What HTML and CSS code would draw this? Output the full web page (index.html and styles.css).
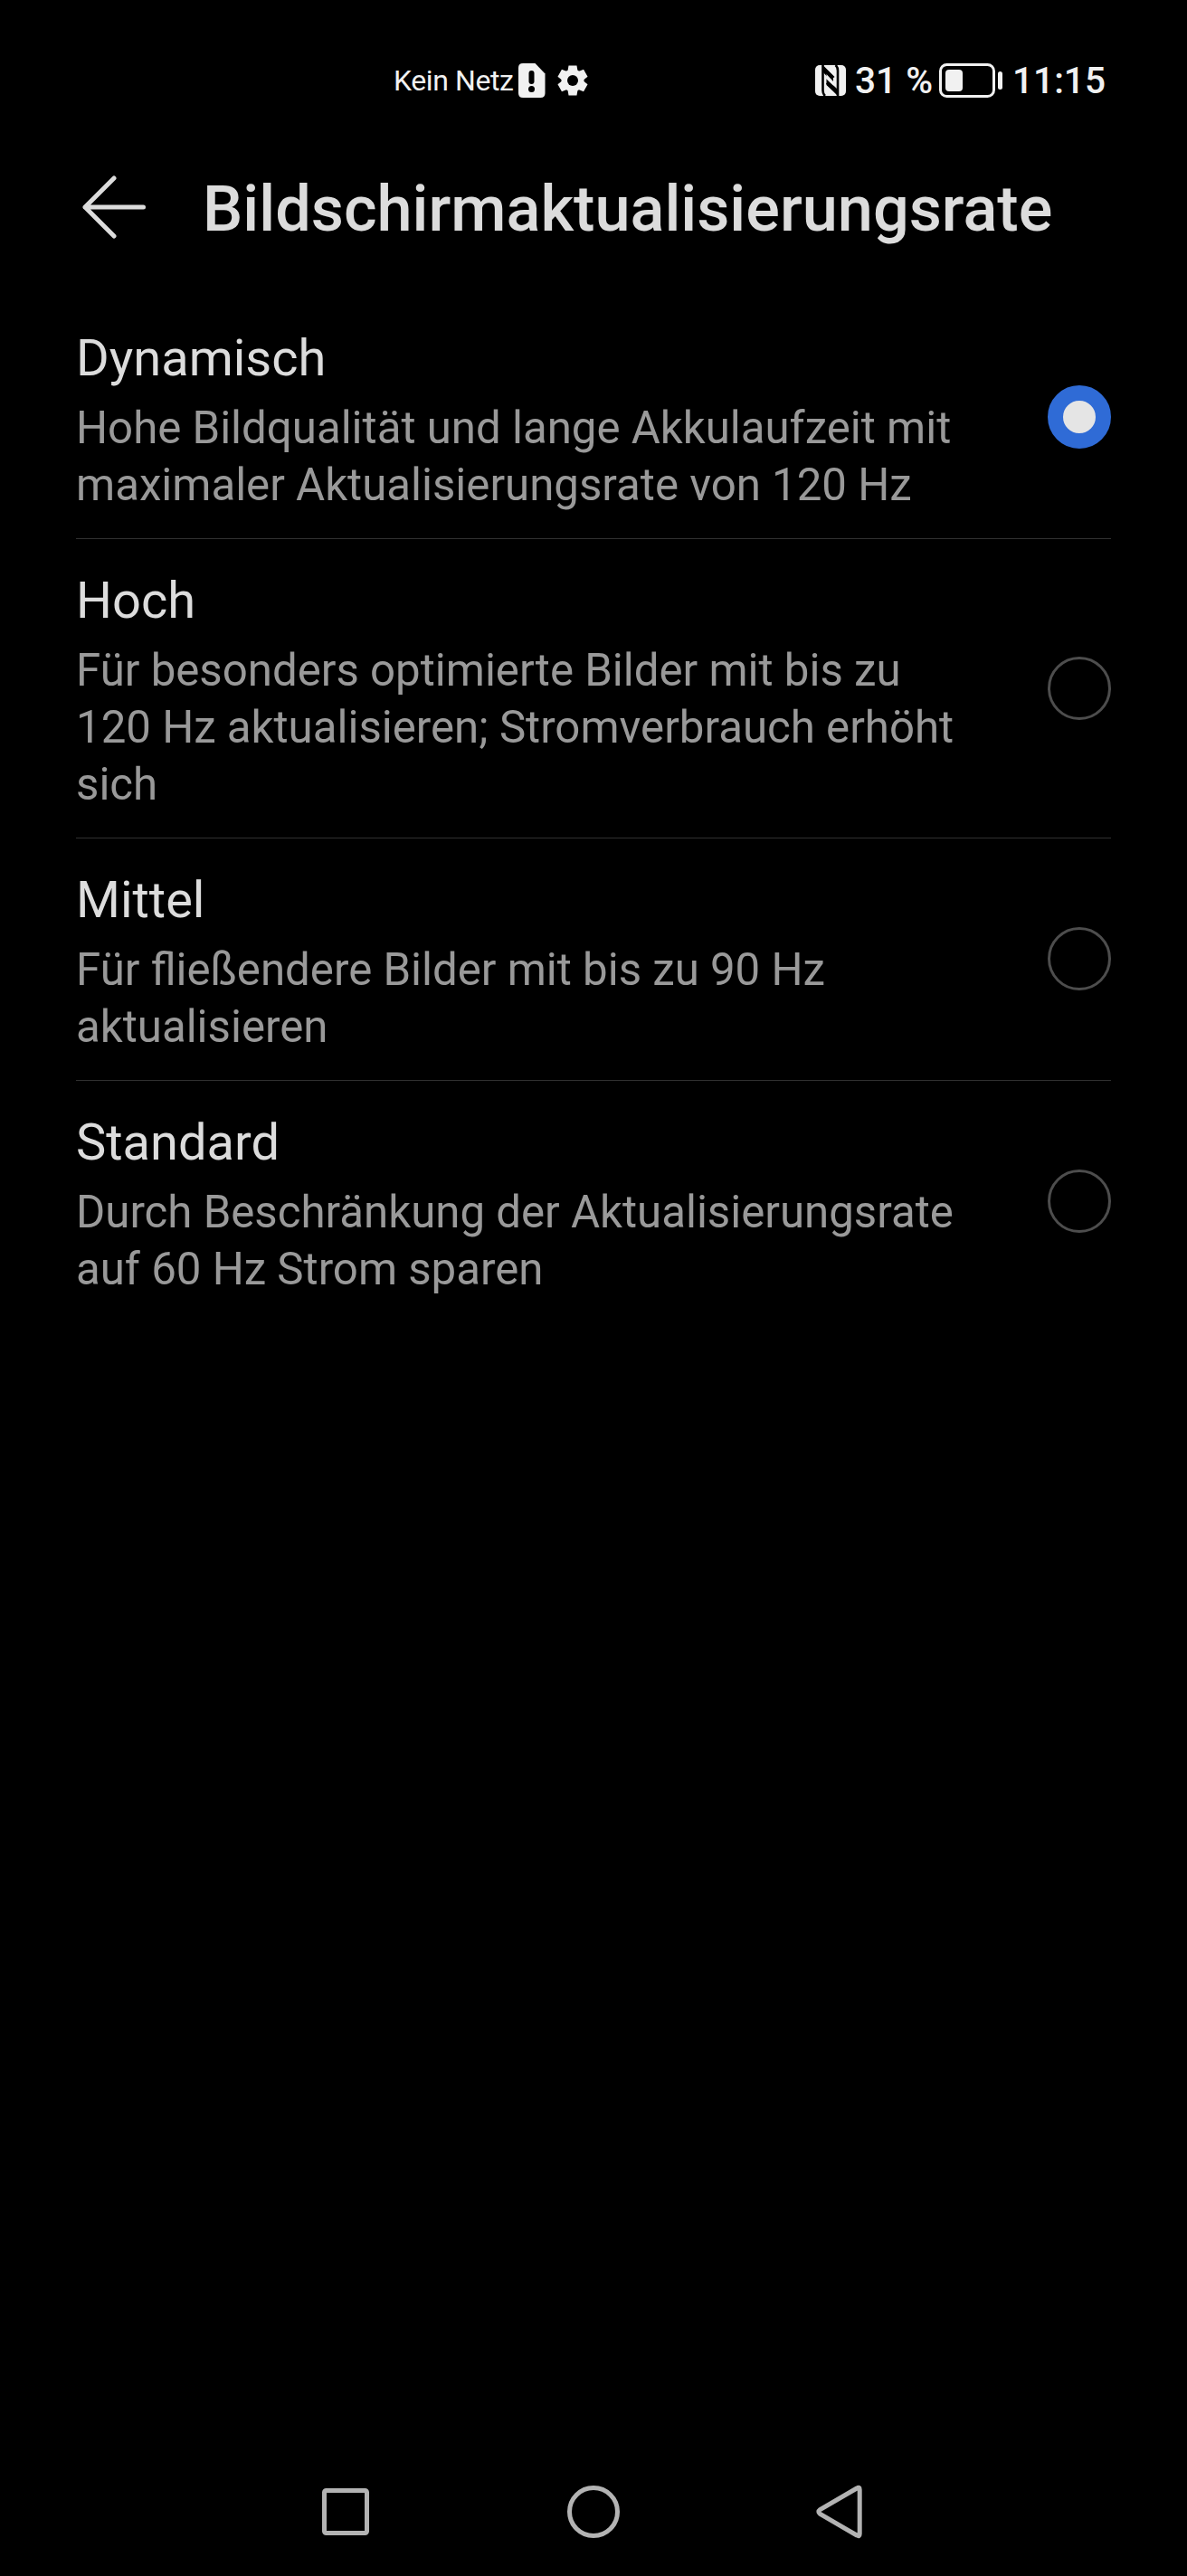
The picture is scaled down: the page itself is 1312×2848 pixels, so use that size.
FILE: index.html
```html
<!DOCTYPE html>
<html lang="de">

<head>
  <meta charset="UTF-8">
  <meta name="viewport" content="width=device-width, initial-scale=1.0">
  <title>Bildschirmaktualisierungsrate</title>
  <link rel="stylesheet" href="styles.css">
</head>

<body>
  <!-- Status bar -->
  <div class="status-bar">
    <div class="status-left">
      <span class="carrier">Kein Netz</span>
      <svg class="sim-icon" width="30" height="38" viewBox="0 0 30 38">
        <path fill="#f1f1f1" d="M5 0H18.500L29.500 11.500V33Q29.500 38 24.500 38H5Q0 38 0 33V5Q0 0 5 0Z" />
        <path d="M14.500 11V20" stroke="#000" stroke-width="6" stroke-linecap="round" />
        <circle cx="14.500" cy="28.500" r="3.500" />
      </svg>
      <svg class="gear-icon" width="34" height="34" viewBox="-17 -17 34 34">
        <g fill="#f1f1f1">
          <circle r="12.500" />
          <path id="tooth" d="M-4.500 -16.500H4.500L5.500 -10.500H-5.500ZM-4.500 16.500H4.500L5.500 10.500H-5.500Z" />
          <use href="#tooth" transform="rotate(60)" />
          <use href="#tooth" transform="rotate(120)" />
        </g>
        <circle r="6" />
      </svg>
    </div>
    <div class="status-right">
      <svg class="nfc-icon" width="34" height="34" viewBox="0 0 34 34">
        <rect width="34" height="34" rx="5" fill="#f1f1f1" />
        <path d="M8.500 0V28Q8.500 32 11 34M25 34V6Q25 2 22.500 0" fill="none" stroke="#000" stroke-width="2.600" />
        <path d="M8 0.500L20 12V20L8 7ZM12.500 15L25 27V33.500L12.500 22Z" />
        <path d="M8.500 1L21 13.500M12.500 20L25 33" stroke="#000" stroke-width="1.500" />
        <path d="M12.500 10L20.500 18.500V23L12.500 15.500Z" fill="#f1f1f1" />
      </svg>
      <span class="percent">31 %</span>
      <svg class="battery-icon" width="70" height="38" viewBox="0 0 70 38">
        <rect x="1.500" y="1.500" width="59" height="35" rx="7" fill="none" stroke="#f1f1f1" stroke-width="3" />
        <rect x="7" y="7" width="19" height="24" rx="4" fill="#f1f1f1" />
        <rect x="65" y="9" width="5" height="20" rx="2.500" fill="#f1f1f1" />
      </svg>
      <span class="clock">11:15</span>
    </div>
  </div>

  <!-- Page title -->
  <header class="header">
    <svg class="back-icon" width="70" height="70" viewBox="0 0 70 70">
      <path d="M35 3L3 35L35 67M3 35H67.500" />
    </svg>
    <h1>Bildschirmaktualisierungsrate</h1>
  </header>

  <!-- Refresh rate options -->
  <main class="options">
    <div class="option">
      <div class="option-text">
        <h2>Dynamisch</h2>
        <p>Hohe Bildqualität und lange Akkulaufzeit mit<br>maximaler Aktualisierungsrate von 120 Hz</p>
      </div>
      <span class="radio checked"></span>
    </div>
    <div class="option">
      <div class="option-text">
        <h2>Hoch</h2>
        <p>Für besonders optimierte Bilder mit bis zu<br>120 Hz aktualisieren; Stromverbrauch erhöht<br>sich</p>
      </div>
      <span class="radio"></span>
    </div>
    <div class="option">
      <div class="option-text">
        <h2>Mittel</h2>
        <p>Für fließendere Bilder mit bis zu 90 Hz<br>aktualisieren</p>
      </div>
      <span class="radio"></span>
    </div>
    <div class="option">
      <div class="option-text">
        <h2>Standard</h2>
        <p>Durch Beschränkung der Aktualisierungsrate<br>auf 60 Hz Strom sparen</p>
      </div>
      <span class="radio"></span>
    </div>
  </main>

  <!-- Navigation bar -->
  <nav class="nav-bar">
    <svg width="60" height="60" viewBox="0 0 60 60">
      <rect x="6.500" y="6.500" width="47" height="47" rx="2" />
    </svg>
    <svg width="60" height="60" viewBox="0 0 60 60">
      <circle cx="30" cy="30" r="26.500" />
    </svg>
    <svg width="60" height="60" viewBox="0 0 60 60">
      <path d="M47 4Q50.200 2 50.200 5.500V54.500Q50.200 58 47 56L6.500 32.500Q3.200 30 6.500 27.500Z" />
    </svg>
  </nav>
</body>

</html>
```
FILE: styles.css
```css
/* General Reset */
* {
  margin: 0;
  padding: 0;
  box-sizing: border-box;
}

body {
  display: flex;
  flex-direction: column;
  height: 2848px;
  font-family: Roboto, sans-serif;
  background-color: #000;
  color: #dcdcdc;
}

svg {
  display: block;
  flex: none;
}

/* Status bar */
.status-bar {
  display: flex;
  justify-content: space-between;
  align-items: center;
  height: 178px;
  padding: 0 88px 0 435px;
  color: #f1f1f1;
  white-space: nowrap;
}

.status-left,
.status-right {
  display: flex;
  align-items: center;
}

.carrier {
  width: 138px;
  font-size: 32px;
  letter-spacing: -0.4px;
}

.gear-icon {
  margin-left: 13px;
}

.percent,
.clock {
  font-size: 40.6px;
  font-weight: 500;
}

.percent {
  width: 93px;
  margin-left: 10px;
}

.clock {
  width: 105px;
  margin-left: 11px;
}

/* Header */
.header {
  display: flex;
  align-items: center;
  height: 150px;
  padding: 0 0 48px 91px;
}

.back-icon {
  fill: none;
  stroke: #dcdcdc;
  stroke-width: 5;
  stroke-linecap: round;
  stroke-linejoin: round;
}

h1 {
  margin-left: 63px;
  padding-top: 4px;
  font-size: 70.25px;
  font-weight: 500;
  line-height: 84px;
  white-space: nowrap;
}

/* Option list */
.options {
  flex: 1;
  padding: 0 84px;
}

.option {
  display: flex;
  justify-content: space-between;
  align-items: center;
  padding: 35px 0 27px;
  border-bottom: 1px solid #303030;
}

.option:last-child {
  border-bottom: none;
}

.option-text {
  white-space: nowrap;
}

h2 {
  margin-bottom: 13px;
  font-size: 56px;
  font-weight: 400;
  line-height: 66px;
}

.option p {
  color: #999;
  font-size: 49.2px;
  line-height: 63px;
}

/* Radio buttons */
.radio {
  width: 70px;
  height: 70px;
  margin-top: -9px;
  border: 3px solid #4d4d4d;
  border-radius: 50%;
}

.radio.checked {
  border: 17px solid #2f6bd6;
  background-color: #e5e5e5;
}

/* Navigation bar */
.nav-bar {
  display: flex;
  justify-content: center;
  gap: 214px;
  height: 101px;
}

.nav-bar svg {
  fill: none;
  stroke: #b3b3b3;
  stroke-width: 5;
}
```
